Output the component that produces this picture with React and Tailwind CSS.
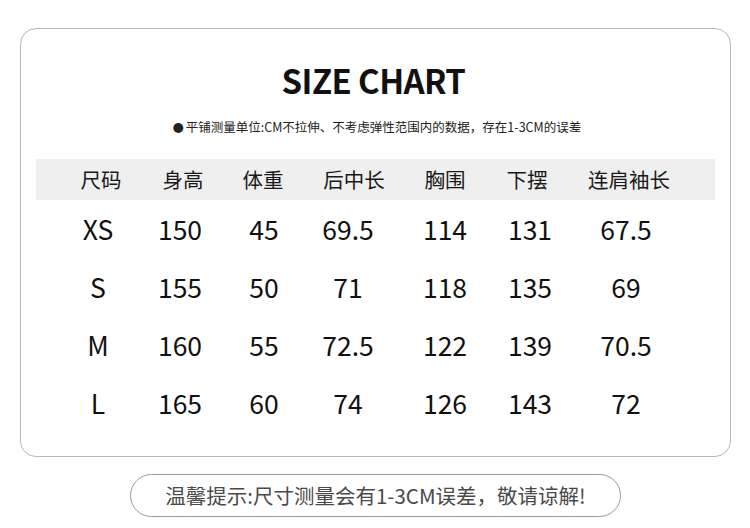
const HEAD = ["尺码", "身高", "体重", "后中长", "胸围", "下摆", "连肩袖长"];

const ROWS = [
  ["XS", "150", "45", "69.5", "114", "131", "67.5"],
  ["S", "155", "50", "71", "118", "135", "69"],
  ["M", "160", "55", "72.5", "122", "139", "70.5"],
  ["L", "165", "60", "74", "126", "143", "72"],
];

export default function App() {
  return (
    <div
      className="w-[750px] h-[528px] bg-white overflow-hidden"
      style={{ fontFamily: '"Noto Sans CJK SC", "Noto Sans", sans-serif' }}
    >
      {/* Card */}
      <div className="mt-[28px] ml-[20px] w-[711px] h-[429px] border border-[#b8b8b8] rounded-[16px] px-[15px] flex flex-col">
        <h1 className="mt-[31px] text-center text-[33px] leading-[40px] font-bold text-[#111] tracking-[-0.6px] pr-[4px]">
          SIZE CHART
        </h1>
        <p className="mt-[19px] text-center text-[12.5px] leading-[16px] text-[#222] pl-[3px]">
          <span className="text-[11px] mr-[2px]">●</span>
          平铺测量单位:CM不拉伸、不考虑弹性范围内的数据，存在1-3CM的误差
        </p>

        {/* Table */}
        <div className="grid grid-cols-[80px_84px_76px_106px_76px_88px_116px] pl-[25px] mt-[24px] h-[41px] items-center bg-[#efefef] text-[20.5px] text-[#1a1a1a]">
          {HEAD.map((h) => (
            <div key={h} className="text-center">{h}</div>
          ))}
        </div>
        <div>
          {ROWS.map((r) => (
            <div
              key={r[0]}
              className="grid grid-cols-[80px_84px_84px_84px_110px_60px_132px] pl-[22px] h-[58px] items-center text-[26.5px] text-[#111]"
            >
              {r.map((v, i) => (
                <div key={i} className="text-center">{v}</div>
              ))}
            </div>
          ))}
        </div>
      </div>

      {/* Note pill */}
      <div className="mt-[17px] ml-[130px] w-[491px] h-[43px] rounded-full border border-[#9a9a9a] flex items-center justify-center text-[20.5px] text-[#4a4a4a]">
        温馨提示:尺寸测量会有1-3CM误差，敬请谅解!
      </div>
    </div>
  );
}
